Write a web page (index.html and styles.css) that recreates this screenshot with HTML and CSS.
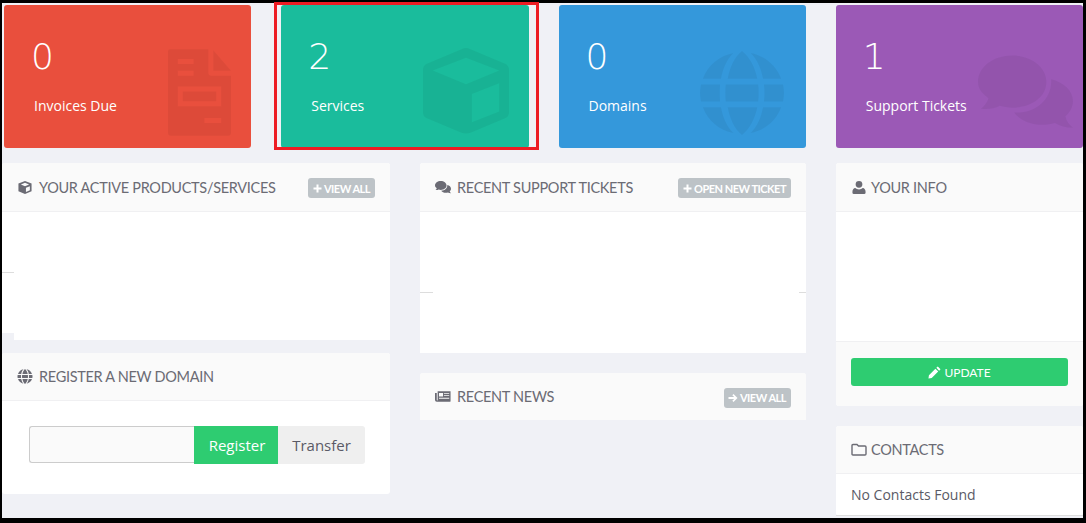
FILE: index.html
```html
<!DOCTYPE html>
<html lang="en">
<head>
  <meta charset="UTF-8" />
  <title>Client Area</title>
  <link rel="stylesheet" href="styles.css">
</head>
<body>
  <div class="page">
  <div class="frame">
    <div class="tiles">
      <div class="tile tile-red">
        <div class="tile-count">0</div>
        <div class="tile-label">Invoices Due</div>
        <svg class="tile-icon icon-invoice" viewBox="0 0 64 88"><path fill-rule="evenodd" d="M2 0H41V24Q41 27 44 27H64V85Q64 88 61 88H3Q0 88 0 85V2Q0 0 2 0ZM10 10V15H26V10ZM10 22V27H26V22ZM10 38V58H54V38ZM15 43H49V53H15ZM37 70V75H54V70Z"/><path d="M46 1L64 22H46Z"/></svg>
      </div>
      <div class="tile tile-green">
        <div class="tile-count">2</div>
        <div class="tile-label">Services</div>
        <svg class="tile-icon icon-cube" viewBox="0 0 88 88"><path fill-rule="evenodd" d="M44 0Q46 0 48 1L84 16Q88 18 88 22V66Q88 70 84 72L48 87Q44 88 40 87L4 72Q0 70 0 66V22Q0 18 4 16L40 1Q42 0 44 0ZM44 10L10 23L44 37L78 23ZM50 47V76L78 65V36Z"/></svg>
      </div>
      <div class="tile tile-blue">
        <div class="tile-count">0</div>
        <div class="tile-label">Domains</div>
        <svg class="tile-icon icon-globe" viewBox="0 0 88 88"><use href="#globe-shape"/></svg>
      </div>
      <div class="tile tile-purple">
        <div class="tile-count">1</div>
        <div class="tile-label">Support Tickets</div>
        <svg class="tile-icon icon-chat" viewBox="0 0 100 80"><path d="M36 0C56 0 72 12 72 28S56 55 36 55C31 55 27 54 23 53C17 56 11 57 3 56C7 53 10 49 11 45C4 40 0 35 0 28C0 12 16 0 36 0Z"/><path d="M77 25C90 28 100 37 100 48C100 54 97 60 92 64C93 69 96 73 100 76C92 76 86 74 81 71C77 72 73 73 68 73C55 73 44 68 38 60C60 61 78 47 77 25Z"/></svg>
      </div>
    </div>

    <div class="columns">
      <div class="col">
        <section class="panel">
          <header class="panel-head">
            <h2><svg class="ico" viewBox="0 0 16 16"><path fill-rule="evenodd" d="M8 1L15 3.800V12L8 15L1 12V3.800ZM8 3L3.600 4.800L8 6.600L12.400 4.800ZM9 8.300V12.800L13.200 11V6.600Z"/></svg>YOUR ACTIVE PRODUCTS/SERVICES</h2>
            <a class="pill"><svg class="pill-mark" viewBox="0 0 9 9"><path d="M3.500 0.500H5.500V3.500H8.500V5.500H5.500V8.500H3.500V5.500H0.500V3.500H3.500Z"/></svg>VIEW ALL</a>
          </header>
          <div class="panel-body body-products">
            <div class="stub-row"><i class="stub stub-narrow"></i></div>
            <div class="notch"></div>
          </div>
        </section>

        <section class="panel panel-domain">
          <header class="panel-head head-short">
            <h2><svg class="ico" viewBox="0 0 88 88"><use href="#globe-shape"/></svg>REGISTER A NEW DOMAIN</h2>
          </header>
          <div class="domain-form">
            <input class="domain-input" type="text" />
            <button class="btn-register">Register</button>
            <button class="btn-transfer">Transfer</button>
          </div>
        </section>
      </div>

      <div class="col">
        <section class="panel">
          <header class="panel-head">
            <h2><svg class="ico" viewBox="0 0 100 80"><path d="M36 0C56 0 72 12 72 28S56 55 36 55C31 55 27 54 23 53C17 56 11 57 3 56C7 53 10 49 11 45C4 40 0 35 0 28C0 12 16 0 36 0Z"/><path d="M77 25C90 28 100 37 100 48C100 54 97 60 92 64C93 69 96 73 100 76C92 76 86 74 81 71C77 72 73 73 68 73C55 73 44 68 38 60C60 61 78 47 77 25Z"/></svg>RECENT SUPPORT TICKETS</h2>
            <a class="pill"><svg class="pill-mark" viewBox="0 0 9 9"><path d="M3.500 0.500H5.500V3.500H8.500V5.500H5.500V8.500H3.500V5.500H0.500V3.500H3.500Z"/></svg>OPEN NEW TICKET</a>
          </header>
          <div class="panel-body body-tickets">
            <div class="stub-row"><i class="stub"></i><i class="stub stub-short"></i></div>
          </div>
        </section>

        <section class="panel panel-news">
          <header class="panel-head head-flat">
            <h2><svg class="ico" viewBox="0 0 18 14"><path fill-rule="evenodd" d="M3 1H17.500V12Q17.500 13 16.500 13H2Q0 13 0 11V3H2V11Q2 11.500 3 11.500ZM4.500 3V7H9V3ZM10 3V4H16V3ZM10 5.500V6.500H16V5.500ZM4.500 8.500V9.500H16V8.500Z"/></svg>RECENT NEWS</h2>
            <a class="pill pill-news"><svg class="pill-arrow" viewBox="0 0 10 10"><path d="M5.500 1L9.500 5L5.500 9L4.300 7.800L6.200 5.900H0.500V4.100H6.200L4.300 2.200Z"/></svg>VIEW ALL</a>
          </header>
        </section>
      </div>

      <div class="col col-side">
        <section class="panel">
          <header class="panel-head">
            <h2><svg class="ico" viewBox="0 0 14 16"><path d="M7 1A3.600 3.600 0 1 1 7 8.200A3.600 3.600 0 1 1 7 1ZM3 8.500C4 9.400 5.400 10 7 10S10 9.400 11 8.500C12.800 8.700 14 10.200 14 12.500V13.500Q14 15 12.500 15H1.500Q0 15 0 13.500V12.500C0 10.200 1.200 8.700 3 8.500Z"/></svg>YOUR INFO</h2>
          </header>
          <div class="panel-body body-info"></div>
          <div class="panel-foot">
            <button class="btn-update"><svg class="ico-small" viewBox="0 0 14 14"><path d="M10.500 0.500L13.500 3.500L12 5L9 2ZM8 3L11 6L4 13L0.500 13.500L1 10Z"/></svg>UPDATE</button>
          </div>
        </section>

        <section class="panel panel-contacts">
          <header class="panel-head head-short">
            <h2><svg class="ico" viewBox="0 0 16 14"><path fill="none" stroke="currentColor" stroke-width="1.400" d="M1 3Q1 2 2 2H6L7.500 3.500H14Q15 3.500 15 4.500V11.500Q15 12.500 14 12.500H2Q1 12.500 1 11.500Z"/></svg>CONTACTS</h2>
          </header>
          <div class="contact-row">No Contacts Found</div>
        </section>
      </div>
    </div>
  </div>

  <div class="highlight"></div>
  </div>

  <svg class="defs" width="0" height="0">
    <defs>
      <path id="globe-shape" fill-rule="evenodd" d="M44 0C52 6 58 18 60 29H29C31 18 36 6 44 0ZM35 2C28 9 24 18 22 29H3C8 15 20 5 35 2ZM53 2C68 5 80 15 85 29H66C64 18 60 9 53 2ZM0 44Q0 40 1 35H21Q20.500 44 21 53H1Q0 48 0 44ZM27 35H61Q62 44 61 53H27Q26 44 27 35ZM67 35H87Q88 40 88 44T87 53H67Q68 44 67 35ZM3 59H22C24 70 28 79 35 86C20 83 8 73 3 59ZM29 59H60C58 70 52 82 44 88C36 82 31 70 29 59ZM66 59H85C80 73 68 83 53 86C60 79 64 70 66 59Z"/>
    </defs>
  </svg>
</body>
</html>
```

FILE: styles.css
```css
* {
  box-sizing: border-box;
}

html, body {
  margin: 0;
  height: 100%;
  overflow: hidden;
}

body {
  font-family: "Open Sans", "Noto Sans", sans-serif;
  font-size: 14px;
  color: #5a5a66;
  background: #000;
}

.page {
  position: relative;
}

.frame {
  height: 523px;
  border-style: solid;
  border-color: #000;
  border-width: 3px 3px 5px 2px;
  background: #f0f1f6;
  overflow: hidden;
}

.defs {
  position: absolute;
}

/* top tiles */
.tiles {
  display: grid;
  grid-template-columns: repeat(4, 1fr);
  gap: 30px;
  padding: 2px 0 0 2px;
}

.tile {
  position: relative;
  height: 143px;
  border-radius: 3px;
  padding: 30px 30px 0;
  color: #fff;
  overflow: hidden;
}

.tile-red { background: #e94f3d; }
.tile-green { background: #1abc9c; }
.tile-blue { background: #3498db; }
.tile-purple { background: #9b59b6; }

.tile-count {
  font-family: "DejaVu Sans", sans-serif;
  font-weight: 200;
  font-size: 36px;
  line-height: 44px;
  margin-left: -3px;
}

.tile-label {
  margin-top: 16px;
  line-height: 22px;
}

.tile-icon {
  position: absolute;
  fill: rgba(0, 0, 0, 0.05);
}

.icon-invoice { left: 164px; top: 44px; width: 63px; height: 87px; }
.icon-cube { left: 142px; top: 43px; width: 86px; height: 86px; }
.icon-globe { left: 141px; top: 46px; width: 84px; height: 84px; }
.icon-chat { left: 142px; top: 50px; width: 95px; height: 77px; }

/* panels */
.columns {
  display: grid;
  grid-template-columns: 388px 386px 1fr;
  gap: 30px;
  margin-top: 15px;
}

.panel {
  background: #fff;
  border-radius: 3px;
}

.panel-head {
  display: flex;
  align-items: center;
  justify-content: space-between;
  height: 49px;
  padding: 0 15px;
  background: #fafafa;
  border-bottom: 1px solid #f0f0f2;
  border-radius: 3px 3px 0 0;
}

.head-short {
  height: 48px;
}

.head-flat {
  height: 47px;
  border-bottom: 0;
}

.panel-head h2 {
  display: flex;
  align-items: center;
  margin: 0;
  font-family: "Lato", sans-serif;
  font-size: 14.5px;
  font-weight: 400;
  letter-spacing: -0.3px;
  white-space: nowrap;
  color: #6b6b74;
}

.ico {
  width: 16px;
  height: 15px;
  margin-right: 6px;
  fill: #6b6b74;
  color: #6b6b74;
}

.col-side .ico {
  margin-right: 4px;
}

.pill {
  display: inline-flex;
  align-items: center;
  flex-shrink: 0;
  height: 20px;
  margin-top: 2px;
  padding: 0 5px;
  border-radius: 3px;
  background: #bdc3c7;
  color: #fff;
  font-family: "Lato", sans-serif;
  font-size: 11px;
  font-weight: 700;
  letter-spacing: -0.5px;
  white-space: nowrap;
}

.pill-news {
  padding-left: 4px;
}

.pill-mark {
  width: 9px;
  height: 9px;
  margin-right: 2px;
  fill: #fff;
}

.pill-arrow {
  width: 10px;
  height: 10px;
  margin-right: 2px;
  fill: #fff;
}

.panel-body {
  background: #fff;
}

.body-products {
  position: relative;
  height: 128px;
}

.body-tickets {
  height: 141px;
}

.body-info {
  height: 129px;
}

.stub-row {
  display: flex;
  justify-content: space-between;
  padding-top: 60px;
}

.body-tickets .stub-row {
  padding-top: 80px;
}

.stub {
  display: block;
  width: 13px;
  height: 1px;
  background: #dddddd;
}

.stub-short {
  width: 7px;
}

.stub-narrow {
  width: 12px;
}

.notch {
  position: absolute;
  left: 0;
  bottom: 0;
  width: 12px;
  height: 7px;
  background: #f0f1f6;
}

.panel-domain {
  margin-top: 13px;
}

.domain-form {
  display: flex;
  padding: 25px 25px 30px 27px;
}

.domain-input {
  width: 165px;
  height: 37px;
  border: 1px solid #ccc;
  border-right: 0;
  border-radius: 3px 0 0 3px;
  background: #fafafa;
}

.btn-register,
.btn-transfer {
  height: 38px;
  border: 0;
  font-family: "Open Sans", sans-serif;
  font-size: 15px;
}

.btn-register {
  width: 84px;
  padding-left: 8px;
  background: #2ecc71;
  color: #fff;
}

.btn-transfer {
  width: 87px;
  background: #efefef;
  color: #5a5a66;
  border-radius: 0 3px 3px 0;
}

.panel-news {
  margin-top: 20px;
  background: #fafafa;
}

.panel-foot {
  padding: 16px 15px 20px;
  background: #fafafa;
  border-top: 1px solid #f0f0f2;
  border-radius: 0 0 3px 3px;
}

.btn-update {
  display: flex;
  align-items: center;
  justify-content: center;
  width: 100%;
  height: 28px;
  border: 0;
  border-radius: 3px;
  background: #2ecc71;
  color: #fff;
  font-family: "Lato", sans-serif;
  font-size: 12px;
}

.ico-small {
  width: 13px;
  height: 13px;
  margin-right: 3px;
  fill: #fff;
}

.panel-contacts {
  margin-top: 20px;
}

.contact-row {
  height: 42px;
  padding: 11px 15px 0;
  border-bottom: 1px solid #ddd;
  line-height: 20px;
}

/* red marker drawn over the screenshot */
.highlight {
  position: absolute;
  left: 274px;
  top: 2px;
  width: 265px;
  height: 148px;
  border: 3px solid #ed1c24;
}
```
